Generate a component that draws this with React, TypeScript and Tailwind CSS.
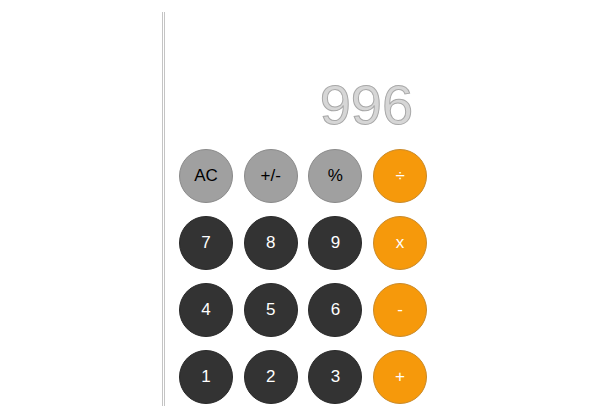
type Key = { label: string; kind: "fn" | "num" | "op" }

const keys: Key[] = [
  { label: "AC", kind: "fn" },
  { label: "+/-", kind: "fn" },
  { label: "%", kind: "fn" },
  { label: "÷", kind: "op" },
  { label: "7", kind: "num" },
  { label: "8", kind: "num" },
  { label: "9", kind: "num" },
  { label: "x", kind: "op" },
  { label: "4", kind: "num" },
  { label: "5", kind: "num" },
  { label: "6", kind: "num" },
  { label: "-", kind: "op" },
  { label: "1", kind: "num" },
  { label: "2", kind: "num" },
  { label: "3", kind: "num" },
  { label: "+", kind: "op" },
]

const kindClass = {
  fn: "bg-[#a0a0a0] border-[#8a8a8a] text-black",
  num: "bg-[#333333] border-[#2a2a2a] text-white",
  op: "bg-[#f6990b] border-[#c98a2a] text-white",
}

export default function App() {
  return (
    <div className="min-h-[406px] bg-white font-['Liberation_Sans',Arial,sans-serif]">
      <div className="ml-[162px] mt-[12px] w-fit min-h-[394px] border-l-[3px] border-double border-[#c4c4c4] pl-[14px]">
        <div className="h-[137px] flex items-end justify-end pr-[14px] pb-[16px]">
          <span className="text-[56px] leading-none text-[#d6d6d6] [-webkit-text-stroke:1px_#a8a8a8]">996</span>
        </div>
        <div className="grid grid-cols-[repeat(4,54px)] gap-x-[10.7px] gap-y-[13px]">
          {keys.map((key) => (
            <button
              key={key.label}
              className={`w-[54px] h-[54px] rounded-full border flex items-center justify-center text-[17px] ${kindClass[key.kind]}`}
            >
              {key.label}
            </button>
          ))}
        </div>
      </div>
    </div>
  )
}
